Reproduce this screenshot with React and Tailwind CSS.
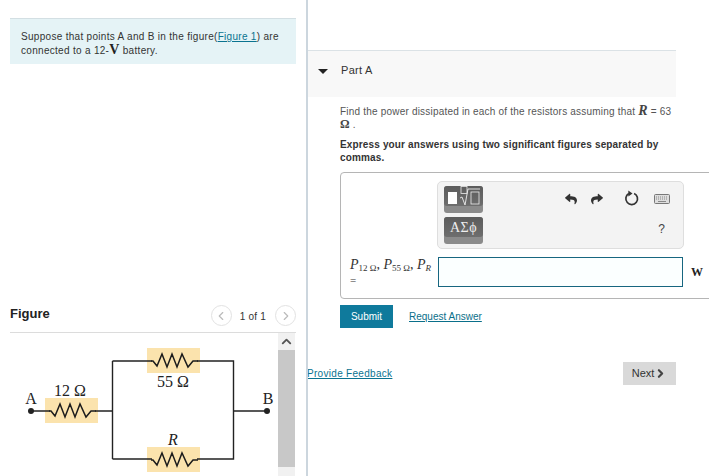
import React from 'react';
import { ChevronLeft, ChevronRight, ChevronUp } from 'lucide-react';
import { FaReply, FaShare } from 'react-icons/fa';

const sans = { fontFamily: '"Liberation Sans", Arial, sans-serif' };
const serif = { fontFamily: '"Liberation Serif", serif' };

function Resistor({ x, y }) {
    return (
        <g>
            <rect x={x} y={y} width="53" height="25" fill="#fbe3ad" />
            <polyline
                points={`${x + 4},${y + 13} ${x + 6},${y + 13} ${x + 10},${y + 18} ${x + 15},${y + 6} ${x + 20},${y + 19} ${x + 25},${y + 6} ${x + 30},${y + 19} ${x + 35},${y + 6} ${x + 41},${y + 19} ${x + 46},${y + 13} ${x + 51},${y + 13}`}
                fill="none"
                stroke="#1c1c1c"
                strokeWidth="1.5"
            />
        </g>
    );
}

function Circuit() {
    return (
        <svg width="278" height="143" viewBox="0 333 278 143" style={serif} className="shrink-0">
            <Resistor x={45} y={398} />
            <Resistor x={147} y={348} />
            <Resistor x={147} y={447} />
            <g fill="none" stroke="#222" strokeWidth="1.4">
                <path d="M31 411 H50 M95 411 H112.5 M112.5 361 V459 M112.5 361 H152 M197 361 H233.5 V459 H197 M152 459 H112.5 M233.5 411 H267" />
            </g>
            <circle cx="31" cy="411" r="3" fill="#222" />
            <circle cx="267" cy="411" r="3" fill="#222" />
            <g fill="#222" fontSize="16" textAnchor="middle">
                <text x="31" y="404">A</text>
                <text x="268" y="404">B</text>
                <text x="70" y="396">12 Ω</text>
                <text x="173" y="387">55 Ω</text>
                <text x="173" y="445" fontStyle="italic">R</text>
            </g>
        </svg>
    );
}

function Scrollbar() {
    return (
        <div className="w-[17px] h-[143px] flex flex-col bg-[#f1f1f1] shrink-0">
            <div className="h-[17px] flex items-center justify-center">
                <ChevronUp size={15} strokeWidth={3} className="text-[#555]" />
            </div>
            <div className="h-[117px] bg-[#c8c8c8]"></div>
        </div>
    );
}

function LeftPane() {
    return (
        <div className="w-[308px] h-[476px] shrink-0 border-r-2 border-[#ccd6de] pl-[10px] pr-[10px] pt-[18px] flex flex-col overflow-hidden">
            <div className="h-[47px] bg-[#e5f3f6] border-t border-[#d3dfe3] pl-[11px] pr-2 pt-[11px] text-[10px] leading-[13px] tracking-[0.3px] text-[#333]">
                Suppose that points A and B in the figure(<a className="text-[#0a7390] underline">Figure 1</a>) are connected to a 12-<b className="text-[14px] leading-none text-[#222]" style={serif}>V</b> battery.
            </div>
            <div className="mt-[238px] h-[31px] border-b border-[#dcdcdc] flex items-start justify-between">
                <span className="mt-[2px] text-[13px] leading-[20px] font-bold text-[#222]">Figure</span>
                <div className="mt-[3px] flex items-center text-[10px] text-[#333]">
                    <span className="w-[21px] h-[21px] rounded-full border border-[#e2e2e2] flex items-center justify-center">
                        <ChevronLeft size={14} className="text-[#bbb]" />
                    </span>
                    <span className="ml-[8px] mr-[9px] pt-[2px] tracking-[0.2px]">1 of 1</span>
                    <span className="w-[21px] h-[21px] rounded-full border border-[#e2e2e2] flex items-center justify-center">
                        <ChevronRight size={14} className="text-[#bbb]" />
                    </span>
                </div>
            </div>
            <div className="flex -ml-[10px]">
                <Circuit />
                <Scrollbar />
            </div>
        </div>
    );
}

function MathButton({ children }) {
    return (
        <div className="w-[39px] h-[27px] rounded-[3px] bg-[#8b8b8b] overflow-hidden">
            <div className="h-[20px] bg-gradient-to-b from-[#5c5c5c] to-[#6e6e6e] flex items-center justify-center text-[#eee] rounded-b-[3px]">
                {children}
            </div>
        </div>
    );
}

function Toolbar() {
    return (
        <div className="ml-[96px] w-[247px] h-[68px] rounded-[5px] border border-[#dedede] bg-[#f3f3f3] pl-[6px] pr-[13px] pt-[4px] flex justify-between">
            <div className="flex flex-col gap-[4px]">
                <MathButton>
                    <svg width="37" height="20" viewBox="0 0 37 20" fill="none">
                        <rect x="3" y="6" width="9" height="12" fill="#fff" />
                        <rect x="16" y="0.5" width="6" height="7" stroke="#eee" strokeWidth="0.8" />
                        <path d="M15 12 L17 11 L20 19 L23 3 H35" stroke="#eee" strokeWidth="0.9" />
                        <rect x="26" y="6" width="8" height="12" stroke="#eee" strokeWidth="0.8" />
                    </svg>
                </MathButton>
                <MathButton>
                    <span className="text-[14px] tracking-[0.5px]" style={serif}>ΑΣϕ</span>
                </MathButton>
            </div>
            <div className="w-[105px] flex flex-col">
                <div className="h-[25px] flex items-center justify-between text-[#333]">
                    <FaReply size={12} />
                    <FaShare size={12} />
                    <svg width="16" height="17" viewBox="0 0 15 16" fill="none" className="ml-[6px]">
                        <path d="M9.5 3.2 A5.5 5.5 0 1 1 4.5 3.4" stroke="#333" strokeWidth="1.6" />
                        <path d="M4 0.5 L8 3.2 L4 6 Z" fill="#333" />
                    </svg>
                    <svg width="16" height="10" viewBox="0 0 16 10">
                        <rect x="0.5" y="0.5" width="15" height="9" rx="1" fill="#ddd" stroke="#777" />
                        <path d="M2 3 H14 M2 5 H14" stroke="#888" strokeDasharray="1 1" />
                        <path d="M4 7.5 H12" stroke="#888" />
                    </svg>
                </div>
                <div className="mt-[10px] text-right pr-[5px] text-[12px] leading-[16px] text-[#444]">?</div>
            </div>
        </div>
    );
}

function AnswerBox() {
    return (
        <div className="mt-[8px] w-[380px] h-[127px] border border-[#b5b5b5] rounded-[4px] pt-[8px]">
            <Toolbar />
            <div className="mt-[8px] pl-[9px] flex">
                <div className="w-[88px] text-[#333] pt-[1px]" style={serif}>
                    <div className="h-[14px] text-[14px] leading-[14px] whitespace-nowrap">
                        <i>P</i><sub className="text-[9px]">12 Ω</sub>, <i>P</i><sub className="text-[9px]">55 Ω</sub>, <i>P</i><sub className="text-[9px]"><i>R</i></sub>
                    </div>
                    <div className="text-[11px] leading-[12px] mt-[2px]">=</div>
                </div>
                <div className="w-[245px] h-[30px] border border-[#176680] bg-[#fbffff]"></div>
                <b className="ml-[8px] mt-[6px] text-[12px] text-[#222]" style={serif}>W</b>
            </div>
        </div>
    );
}

function RightPane() {
    return (
        <div className="flex-1 h-[476px] pt-[50px] overflow-hidden">
            <div className="w-[368px] h-[47px] bg-[#f8f8f8] border-t border-[#dbe2e6] flex items-start pt-[12px]">
                <span className="ml-[10px] mt-[6px] w-0 h-0 border-x-[5px] border-x-transparent border-t-[5px] border-t-[#222]"></span>
                <span className="ml-[13px] text-[11px] leading-[14px] tracking-[0.3px] text-[#333]">Part A</span>
            </div>
            <div className="pl-[32px] pt-[7px]">
                <p className="w-[340px] h-[26px] text-[10px] leading-[13px] tracking-[0.2px] text-[#555]">
                    Find the power dissipated in each of the resistors assuming that <b className="text-[14px] leading-none text-[#444]" style={serif}><i>R</i></b> = 63 <b className="text-[12px] leading-none text-[#444]" style={serif}>Ω</b> .
                </p>
                <p className="mt-[8px] w-[340px] text-[10px] leading-[13px] tracking-[0.15px] font-bold text-[#333]">
                    Express your answers using two significant figures separated by commas.
                </p>
                <AnswerBox />
                <div className="mt-[6px] flex items-center">
                    <button className="w-[53px] h-[23px] bg-[#0f7a9c] text-white text-[10px]">Submit</button>
                    <a className="ml-[16px] -mt-[1px] text-[#0a6f8a] text-[10px] underline">Request Answer</a>
                </div>
            </div>
            <div className="mt-[34px] w-[368px] flex items-start justify-between">
                <a className="-ml-[1px] mt-[4px] text-[#0a7390] text-[10px] tracking-[0.3px] underline">Provide Feedback</a>
                <button className="w-[53px] h-[23px] bg-[#d9d9d9] text-[#333] text-[11px] flex items-center justify-center">
                    Next <ChevronRight size={13} strokeWidth={4} className="text-[#444]" />
                </button>
            </div>
        </div>
    );
}

export default function App() {
    return (
        <div className="w-[709px] h-[476px] bg-white flex overflow-hidden" style={sans}>
            <LeftPane />
            <RightPane />
        </div>
    );
}
